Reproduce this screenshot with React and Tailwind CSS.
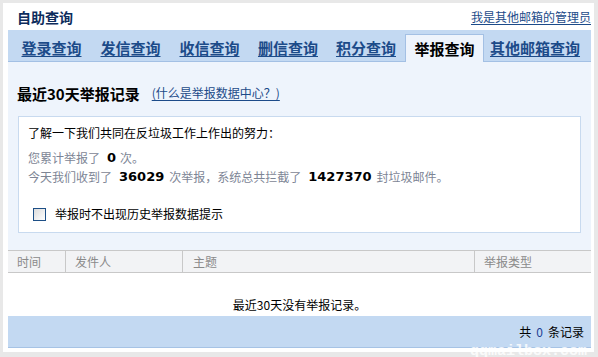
import React from "react";

const F = { fontFamily: '"Noto Sans CJK SC", "Noto Sans", sans-serif' };
const NUM = { fontFamily: '"DejaVu Sans", sans-serif' };

function Tab({ children, w, active, pl }) {
  if (active) {
    return (
      <div
        className={`relative z-10 flex h-[28px] ${w} items-center justify-center self-end border border-b-0 border-[#a3c0e4] bg-[#eef4fc] text-[15px] font-bold leading-none text-black -mb-px`}
      >
        {children}
      </div>
    );
  }
  return (
    <div className={`flex h-[28px] ${w} ${pl ? "justify-start " + pl : "justify-center"} items-center self-end`}>
      <a className="text-[15px] font-bold leading-none text-[#1c4b89] underline underline-offset-2">
        {children}
      </a>
    </div>
  );
}

export default function App() {
  return (
    <div className="relative h-[357px] w-[598px] overflow-hidden bg-[#e8e8e8] pt-[3px] pl-[3px]" style={F}>
      <div className="flex h-[349px] w-[591px] flex-col bg-white pl-[5px] pr-[3px]">
        {/* title row */}
        <div className="flex h-[27px] items-center justify-between pl-[9px]">
          <div className="text-[14px] font-bold leading-none text-[#0d2c5c]">自助查询</div>
          <a className="text-[12px] leading-none text-[#1c4b89] underline underline-offset-2">我是其他邮箱的管理员</a>
        </div>

        {/* tab bar */}
        <div className="flex h-[32px] items-end border-b border-[#a3c0e4] bg-[#c3d9f2] pl-[4px]">
          <Tab w="w-[79px]">登录查询</Tab>
          <Tab w="w-[79px]">发信查询</Tab>
          <Tab w="w-[79px]">收信查询</Tab>
          <Tab w="w-[78px]">删信查询</Tab>
          <Tab w="w-[78px]">积分查询</Tab>
          <Tab w="w-[79px]" active>举报查询</Tab>
          <Tab w="w-auto" pl="pl-[6px]">其他邮箱查询</Tab>
        </div>

        {/* content */}
        <div className="flex h-[188px] flex-col bg-[#eef4fc]">
          <div className="mt-[21px] flex h-[20px] items-center pl-[9px]">
            <span className="text-[15px] font-bold leading-none text-black">最近30天举报记录</span>
            <a className="ml-[12px] text-[12px] leading-none text-[#1c4b89] underline underline-offset-2">
              (什么是举报数据中心？)
            </a>
          </div>

          <div className="mx-[10px] mt-[13px] flex flex-col border border-[#c8daef] bg-white pl-[9px] pb-[8px] pt-[6px]">
            <div className="flex h-[20px] items-center text-[12px] leading-none text-black">
              了解一下我们共同在反垃圾工作上作出的努力：
            </div>
            <div className="mt-[5px] flex h-[19px] items-center text-[12px] leading-none text-[#7d8595]">
              <span>您累计举报了</span>
              <b className="ml-[7px] mr-[4px] text-[13px] text-black" style={NUM}>0</b>
              <span>次。</span>
            </div>
            <div className="flex h-[19px] items-center text-[12px] leading-none text-[#7d8595]">
              <span>今天我们收到了</span>
              <b className="ml-[7px] mr-[5px] text-[13px] text-black" style={NUM}>36029</b>
              <span>次举报，系统总共拦截了</span>
              <b className="ml-[7px] mr-[5px] text-[13px] text-black" style={NUM}>1427370</b>
              <span>封垃圾邮件。</span>
            </div>
            <div className="mt-[18px] flex h-[20px] items-center pl-[5px]">
              <span className="block h-[13px] w-[13px] border border-[#1d4f86] bg-gradient-to-br from-[#dcdcdc] to-white" />
              <span className="ml-[9px] text-[12px] leading-none text-black">举报时不出现历史举报数据提示</span>
            </div>
          </div>
        </div>

        {/* table header */}
        <div className="grid h-[23px] grid-cols-[57px_117px_292px_117px] border-y border-[#c8c8c8] bg-[#f2f3f5] text-[12px] leading-none text-[#8a8a8a]">
          <div className="flex items-center pl-[9px]">时间</div>
          <div className="flex items-center border-l border-[#c8c8c8] pl-[9px]">发件人</div>
          <div className="flex items-center border-l border-[#c8c8c8] pl-[10px]">主题</div>
          <div className="flex items-center border-l border-[#c8c8c8] pl-[9px]">举报类型</div>
        </div>

        {/* empty row */}
        <div className="flex h-[43px] items-start justify-center pt-[22px]">
          <span className="flex h-[20px] items-center text-[12px] leading-none text-black">最近30天没有举报记录。</span>
        </div>

        {/* footer */}
        <div className="flex h-[32px] items-center justify-end border-b border-[#a6c3e5] bg-[#c3d9f2] pr-[7px] text-[12px] leading-none text-black">
          <span>共</span>
          <span className="mx-[5px] text-[#1c3f94]">0</span>
          <span>条记录</span>
        </div>
      </div>

      {/* watermark */}
      <div
        className="absolute left-[470px] top-[344px] text-[15px] font-bold leading-none text-white/80"
        style={{ fontFamily: '"Liberation Mono", monospace' }}
      >
        qqmailbox.com
      </div>
    </div>
  );
}
